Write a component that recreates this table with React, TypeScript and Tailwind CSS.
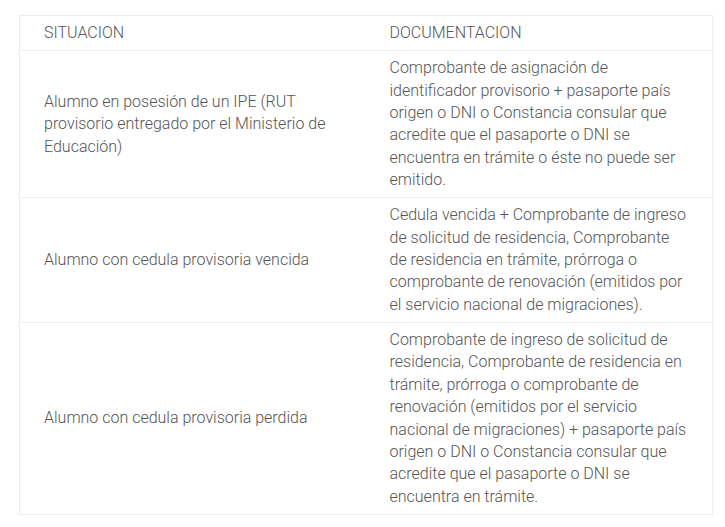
const rows: { situacion: string; documentacion: string }[] = [
  {
    situacion: "Alumno en posesión de un IPE (RUT provisorio entregado por el Ministerio de Educación)",
    documentacion:
      "Comprobante de asignación de identificador provisorio + pasaporte país origen o DNI o Constancia consular que acredite que el pasaporte o DNI se encuentra en trámite o éste no puede ser emitido.",
  },
  {
    situacion: "Alumno con cedula provisoria vencida",
    documentacion:
      "Cedula vencida + Comprobante de ingreso de solicitud de residencia, Comprobante de residencia en trámite, prórroga o comprobante de renovación (emitidos por el servicio nacional de migraciones).",
  },
  {
    situacion: "Alumno con cedula provisoria perdida",
    documentacion:
      "Comprobante de ingreso de solicitud de residencia, Comprobante de residencia en trámite, prórroga o comprobante de renovación (emitidos por el servicio nacional de migraciones) + pasaporte país origen o DNI o Constancia consular que acredite que el pasaporte o DNI se encuentra en trámite.",
  },
];

export default function App() {
  return (
    <div className="min-h-[527px] bg-white pl-[19px] pt-[15px] font-['Roboto',sans-serif] font-light text-[16px] leading-[22.35px] text-[#555]">
      <table className="w-[694px] border-collapse border border-[#eeeeee] table-fixed">
        <colgroup>
          <col className="w-[346px]" />
          <col />
        </colgroup>
        <thead>
          <tr className="border-b border-[#eeeeee]">
            <th className="px-[24px] py-[6px] text-left font-light">SITUACION</th>
            <th className="px-[24px] py-[6px] text-left font-light">DOCUMENTACION</th>
          </tr>
        </thead>
        <tbody>
          {rows.map((r) => (
            <tr key={r.situacion} className="border-b border-[#eeeeee]">
              <td className="px-[24px] py-[6px] align-middle">{r.situacion}</td>
              <td className="pl-[24px] pr-[22px] py-[6px] align-middle">{r.documentacion}</td>
            </tr>
          ))}
        </tbody>
      </table>
    </div>
  );
}
